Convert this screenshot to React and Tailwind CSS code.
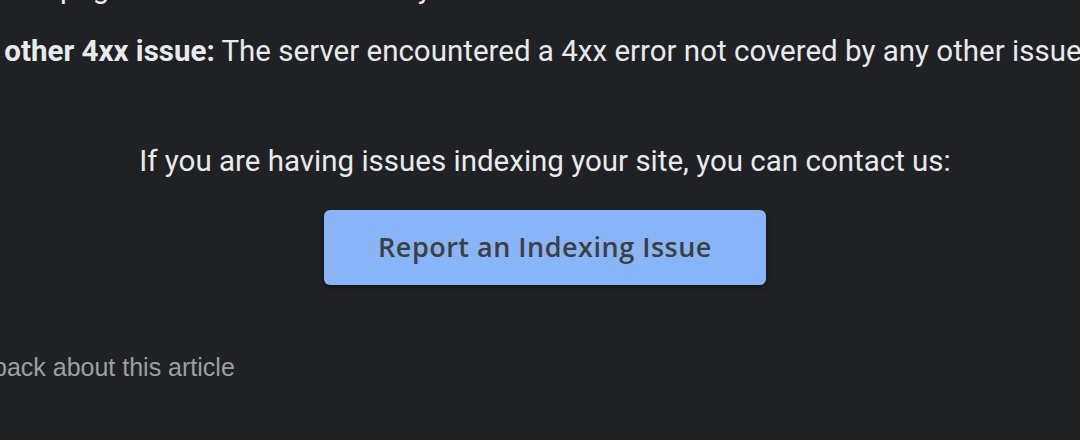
export default function App() {
  return (
    <div className="w-[1080px] h-[440px] overflow-hidden bg-[#202124] font-['Roboto',sans-serif] text-[#e8eaed]">
      <div className="-mt-[28px] whitespace-nowrap text-[29.5px]">
        <p className="-ml-[43px] leading-[32px]">
          ked the page when it was fetched by the crawler.
        </p>
        <p className="mt-[29px] -ml-[259px] leading-[36px]">
          <span className="font-bold">URL blocked due to other 4xx issue:</span> The server encountered a 4xx error not covered by any other issue type.
        </p>
      </div>

      <div className="mt-[74px] flex flex-col items-center pl-[10px]">
        <p className="text-[29.5px] leading-[36px]">
          If you are having issues indexing your site, you can contact us:
        </p>
        <button className="mt-[31px] w-[442px] h-[75px] rounded-[6px] bg-[#8ab4f8] shadow-[0_2px_4px_rgba(0,0,0,0.5)] text-[#3c4043] font-['Open_Sans',sans-serif] text-[27px] font-semibold tracking-[0.5px]">
          Report an Indexing Issue
        </button>
      </div>

      <p className="mt-[64px] -ml-[121px] whitespace-nowrap font-['Liberation_Sans',Arial,sans-serif] text-[25px] leading-[36px] text-[#9aa0a6]">
        Send feedback about this article
      </p>
    </div>
  )
}
